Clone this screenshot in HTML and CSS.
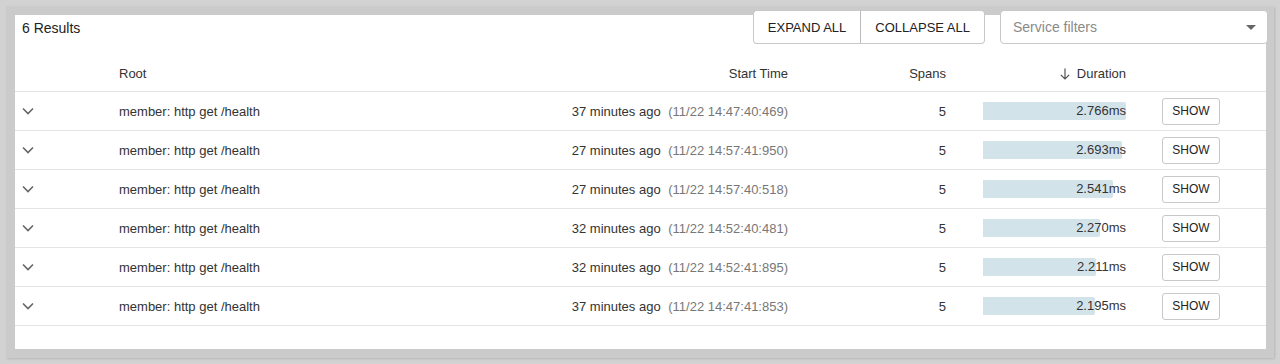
FILE: index.html
```html
<!DOCTYPE html>
<html lang="en">

<head>
    <meta charset="UTF-8">
    <title>Traces</title>
    <link rel="stylesheet" href="styles.css">
</head>

<body>
    <div class="frame">
        <div class="card">
            <div class="toolbar">
                <div class="count">6 Results</div>
                <div class="btn-group">
                    <button class="btn">EXPAND ALL</button>
                    <button class="btn">COLLAPSE ALL</button>
                </div>
                <div class="select">
                    <span class="placeholder">Service filters</span>
                    <span class="caret"></span>
                </div>
            </div>

            <div class="row head">
                <div></div>
                <div>Root</div>
                <div class="right">Start Time</div>
                <div class="right">Spans</div>
                <div class="right dur-head">
                    <svg width="14" height="14" viewBox="0 0 14 14"><path d="M7 1.5v10.5M2.8 7.8L7 12l4.2-4.2" fill="none" stroke="#555" stroke-width="1.2"/></svg>
                    Duration
                </div>
                <div></div>
            </div>

            <div class="row">
                <div class="chev"><svg width="12" height="8" viewBox="0 0 12 8"><path d="M1 1.5l5 5 5-5" fill="none" stroke="#666" stroke-width="1.6"/></svg></div>
                <div>member: http get /health</div>
                <div class="right">37 minutes ago <span class="abs">(11/22 14:47:40:469)</span></div>
                <div class="right">5</div>
                <div class="dur"><div class="bar-box"><div class="bar" style="width:143px"></div><span class="val">2.766ms</span></div></div>
                <div><button class="show">SHOW</button></div>
            </div>
            <div class="row">
                <div class="chev"><svg width="12" height="8" viewBox="0 0 12 8"><path d="M1 1.5l5 5 5-5" fill="none" stroke="#666" stroke-width="1.6"/></svg></div>
                <div>member: http get /health</div>
                <div class="right">27 minutes ago <span class="abs">(11/22 14:57:41:950)</span></div>
                <div class="right">5</div>
                <div class="dur"><div class="bar-box"><div class="bar" style="width:139px"></div><span class="val">2.693ms</span></div></div>
                <div><button class="show">SHOW</button></div>
            </div>
            <div class="row">
                <div class="chev"><svg width="12" height="8" viewBox="0 0 12 8"><path d="M1 1.5l5 5 5-5" fill="none" stroke="#666" stroke-width="1.6"/></svg></div>
                <div>member: http get /health</div>
                <div class="right">27 minutes ago <span class="abs">(11/22 14:57:40:518)</span></div>
                <div class="right">5</div>
                <div class="dur"><div class="bar-box"><div class="bar" style="width:130px"></div><span class="val">2.541ms</span></div></div>
                <div><button class="show">SHOW</button></div>
            </div>
            <div class="row">
                <div class="chev"><svg width="12" height="8" viewBox="0 0 12 8"><path d="M1 1.5l5 5 5-5" fill="none" stroke="#666" stroke-width="1.6"/></svg></div>
                <div>member: http get /health</div>
                <div class="right">32 minutes ago <span class="abs">(11/22 14:52:40:481)</span></div>
                <div class="right">5</div>
                <div class="dur"><div class="bar-box"><div class="bar" style="width:117px"></div><span class="val">2.270ms</span></div></div>
                <div><button class="show">SHOW</button></div>
            </div>
            <div class="row">
                <div class="chev"><svg width="12" height="8" viewBox="0 0 12 8"><path d="M1 1.5l5 5 5-5" fill="none" stroke="#666" stroke-width="1.6"/></svg></div>
                <div>member: http get /health</div>
                <div class="right">32 minutes ago <span class="abs">(11/22 14:52:41:895)</span></div>
                <div class="right">5</div>
                <div class="dur"><div class="bar-box"><div class="bar" style="width:113px"></div><span class="val">2.211ms</span></div></div>
                <div><button class="show">SHOW</button></div>
            </div>
            <div class="row">
                <div class="chev"><svg width="12" height="8" viewBox="0 0 12 8"><path d="M1 1.5l5 5 5-5" fill="none" stroke="#666" stroke-width="1.6"/></svg></div>
                <div>member: http get /health</div>
                <div class="right">37 minutes ago <span class="abs">(11/22 14:47:41:853)</span></div>
                <div class="right">5</div>
                <div class="dur"><div class="bar-box"><div class="bar" style="width:112px"></div><span class="val">2.195ms</span></div></div>
                <div><button class="show">SHOW</button></div>
            </div>
        </div>
    </div>
</body>

</html>
```

FILE: styles.css
```css
html,
body {
    margin: 0;
    padding: 0;
}

body {
    background: #d2d2d2;
    padding: 6px;
    font-family: "Liberation Sans", Arial, sans-serif;
    font-size: 13px;
    color: #333;
}

.frame {
    background: #cbcbcb;
    padding: 9px 8px 9px 9px;
    height: 334px;
    box-shadow: 1px 1px 2px rgba(0, 0, 0, 0.12);
}

.card {
    background: #fff;
    height: 334px;
}

.toolbar {
    display: flex;
    align-items: center;
    height: 30px;
    padding: 0 0 0 7px;
    transform: translateY(-3px);
}

.count {
    flex: 1;
    font-size: 14px;
    color: #222;
    margin-top: 1px;
}

.btn-group {
    display: flex;
    margin-right: 15px;
}

.btn {
    font-family: inherit;
    font-size: 13px;
    color: #222;
    background: #fff;
    border: 1px solid #c8c8c8;
    height: 34px;
    padding: 0 14px;
    margin: 0;
}

.btn:first-child {
    border-radius: 4px 0 0 4px;
    border-right: 1px solid #bbb;
}

.btn:last-child {
    border-radius: 0 4px 4px 0;
    border-left: none;
}

.select {
    width: 268px;
    height: 34px;
    box-sizing: border-box;
    border: 1px solid #c8c8c8;
    border-radius: 4px;
    display: flex;
    align-items: center;
    padding: 0 12px;
    margin-right: -2px;
    background: #fff;
}

.placeholder {
    flex: 1;
    font-size: 14px;
    color: #8a8a8a;
}

.caret {
    width: 0;
    height: 0;
    border-left: 5px solid transparent;
    border-right: 5px solid transparent;
    border-top: 5px solid #666;
    margin-right: -1px;
}

.row {
    display: grid;
    grid-template-columns: 104px 369px 300px 158px 180px 140px;
    align-items: center;
    height: 38px;
    border-bottom: 1px solid #e4e4e4;
}

.row.head {
    margin-top: 10px;
    height: 36px;
}

.right {
    text-align: right;
}

.dur-head {
    display: flex;
    justify-content: flex-end;
    align-items: center;
    gap: 5px;
}

.dur-head svg {
    margin-top: 1px;
}

.chev {
    padding-left: 7px;
    padding-top: 0;
    height: 8px;
    line-height: 0;
}

.abs {
    color: #777;
    margin-left: 4px;
}

.dur {
    display: flex;
    justify-content: flex-end;
}

.bar-box {
    position: relative;
    width: 143px;
    height: 18px;
}

.bar {
    height: 18px;
    background: #d3e3ea;
    border-radius: 0 2px 2px 0;
}

.val {
    position: absolute;
    right: 0;
    top: 1px;
    line-height: 16px;
}

.show {
    margin-left: 36px;
    font-family: inherit;
    font-size: 12px;
    color: #222;
    background: #fff;
    border: 1px solid #c8c8c8;
    border-radius: 3px;
    width: 58px;
    height: 27px;
    padding: 0;
}
```
